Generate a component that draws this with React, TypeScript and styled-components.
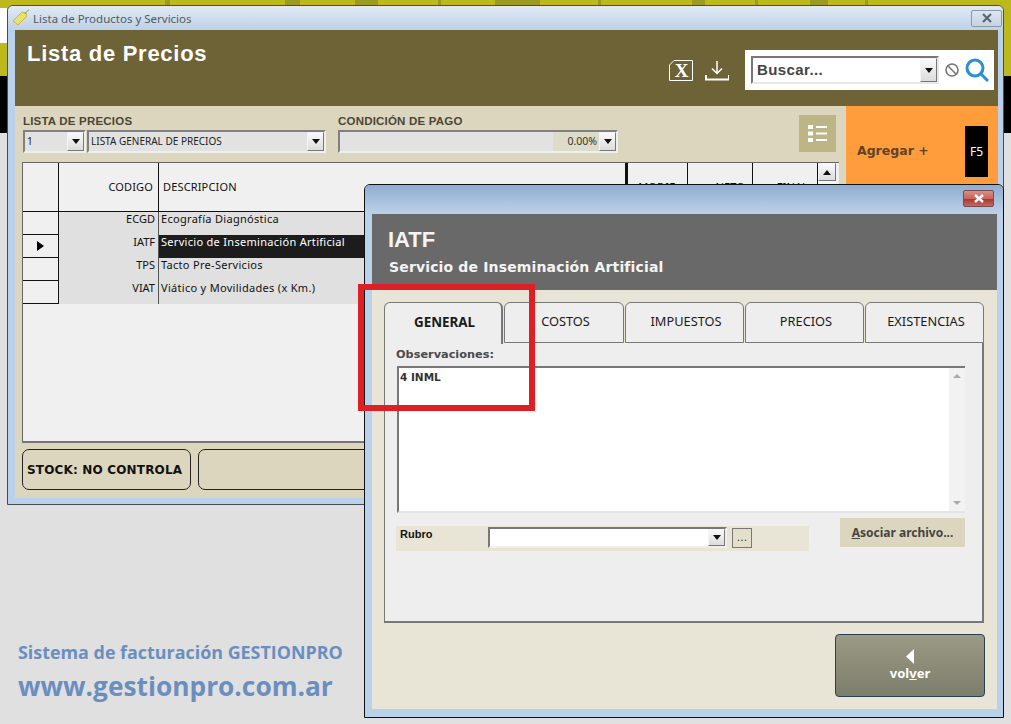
import React from "react";
import styled, { createGlobalStyle } from "styled-components";

const rows = [
  { code: "ECGD", desc: "Ecografía Diagnóstica" },
  { code: "IATF", desc: "Servicio de Inseminación Artificial", selected: true },
  { code: "TPS", desc: "Tacto Pre-Servicios" },
  { code: "VIAT", desc: "Viático y Movilidades (x Km.)" },
];

const tabs = [
  { label: "GENERAL", width: 119 },
  { label: "COSTOS", width: 120 },
  { label: "IMPUESTOS", width: 119 },
  { label: "PRECIOS", width: 119 },
  { label: "EXISTENCIAS", width: 119 },
];

function Caret() {
  return (
    <svg width="8" height="5" viewBox="0 0 8 5">
      <path d="M0 0h8L4 5z" fill="#111" />
    </svg>
  );
}

export default function App() {
  return (
    <>
      <GlobalStyle />
      <Desktop>
        <OliveBand>
          <WhiteEdge />
        </OliveBand>
        <BlackBand />
        <GrayArea>
          <Promo>
            <PromoLine>Sistema de facturación GESTIONPRO</PromoLine>
            <PromoUrl>www.gestionpro.com.ar</PromoUrl>
          </Promo>
        </GrayArea>

        <MainWindow>
          <MainTitleBar>
            <svg width="18" height="18" viewBox="0 0 18 18">
              <path d="M1 12 10 3l4 1 1 3-9 9z" fill="#e8e070" stroke="#c4bb40" />
              <path d="M13 5c1-2 2-3 4-4" fill="none" stroke="#777" strokeWidth="0.8" />
            </svg>
            <MainTitleText>Lista de Productos y Servicios</MainTitleText>
            <MainClose>
              <svg width="12" height="10" viewBox="0 0 12 10">
                <path d="M2 1l8 8M10 1 2 9" stroke="#5c6670" strokeWidth="2.2" fill="none" />
              </svg>
            </MainClose>
          </MainTitleBar>
          <MainFrame>
            <Header>
              <PageTitle>Lista de Precios</PageTitle>
              <HeaderTools>
                <svg width="24" height="21" viewBox="0 0 24 21">
                  <path d="M5 .5h18.500v20H.5V5z" fill="none" stroke="#fff" />
                  <text x="12.500" y="16.500" textAnchor="middle" fontFamily="Liberation Serif" fontWeight="700" fontSize="19" fill="#fff">X</text>
                </svg>
                <svg width="24" height="21" viewBox="0 0 24 21">
                  <path d="M12 1v12M7 8.500l5 5 5-5" fill="none" stroke="#fff" strokeWidth="1.500" />
                  <path d="M1 15v4.500h23V15" fill="none" stroke="#fff" strokeWidth="2" />
                </svg>
                <SearchBox>
                  <SearchCombo>
                    <SearchText>Buscar...</SearchText>
                    <DropButton>
                      <Caret />
                    </DropButton>
                  </SearchCombo>
                  <svg width="16" height="16" viewBox="0 0 16 16">
                    <circle cx="8" cy="8" r="6" fill="none" stroke="#777" strokeWidth="1.600" />
                    <path d="M3.800 3.800l8.400 8.400" stroke="#777" strokeWidth="1.600" />
                  </svg>
                  <svg width="24" height="24" viewBox="0 0 24 24">
                    <circle cx="10" cy="10" r="8" fill="none" stroke="#2b8fd6" strokeWidth="3" />
                    <path d="M15.500 15.500 23 23" stroke="#2b8fd6" strokeWidth="3" />
                  </svg>
                </SearchBox>
              </HeaderTools>
            </Header>
            <MainBody>
              <BodyLeft>
                <FilterRow>
                  <FilterGroup>
                    <FilterLabel>LISTA DE PRECIOS</FilterLabel>
                    <ComboRow>
                      <Combo $width={63}>
                        <ComboText>1</ComboText>
                        <DropButton>
                          <Caret />
                        </DropButton>
                      </Combo>
                      <Combo $width={239}>
                        <ComboText>LISTA GENERAL DE PRECIOS</ComboText>
                        <DropButton>
                          <Caret />
                        </DropButton>
                      </Combo>
                    </ComboRow>
                  </FilterGroup>
                  <FilterGroup>
                    <FilterLabel>CONDICIÓN DE PAGO</FilterLabel>
                    <Combo $width={280}>
                      <ComboFill />
                      <Percent>0.00%</Percent>
                      <DropButton>
                        <Caret />
                      </DropButton>
                    </Combo>
                  </FilterGroup>
                  <ListButton>
                    <svg width="19" height="17" viewBox="0 0 19 17">
                      <path d="M0 0h5v4H0zM0 6.500h5v4H0zM0 13h5v4H0z" fill="#fff" />
                      <path d="M8 1h11v2H8zM8 7.500h11v2H8zM8 14h11v2H8z" fill="#fff" />
                    </svg>
                  </ListButton>
                </FilterRow>
                <Grid>
                  <HeadCell />
                  <HeadCell $align="right" $pad={5}>CODIGO</HeadCell>
                  <HeadCell $thick>DESCRIPCION</HeadCell>
                  <HeadCell $align="right" $pad={12}>MODIF</HeadCell>
                  <HeadCell $align="right" $pad={7}>NETO</HeadCell>
                  <HeadCell $align="right" $pad={9}>FINAL</HeadCell>
                  <ScrollColumn>
                    <ScrollButton>
                      <svg width="8" height="5" viewBox="0 0 8 5">
                        <path d="M0 5h8L4 0z" fill="#111" />
                      </svg>
                    </ScrollButton>
                  </ScrollColumn>
                  {rows.map((row) => (
                    <React.Fragment key={row.code}>
                      <Selector>
                        {row.selected && (
                          <svg width="7" height="10" viewBox="0 0 7 10">
                            <path d="M0 0l7 5-7 5z" fill="#000" />
                          </svg>
                        )}
                      </Selector>
                      <CodeCell>{row.code}</CodeCell>
                      <DescCell $selected={row.selected}>{row.desc}</DescCell>
                      <DataCell />
                      <DataCell />
                      <DataCell />
                    </React.Fragment>
                  ))}
                </Grid>
                <StatusRow>
                  <StatusBox $width={169}>STOCK: NO CONTROLA</StatusBox>
                  <StatusBox $width={630} />
                </StatusRow>
              </BodyLeft>
              <AddPanel>
                <AddRow>
                  <AddLabel>Agregar +</AddLabel>
                  <KeyBadge>F5</KeyBadge>
                </AddRow>
              </AddPanel>
            </MainBody>
          </MainFrame>
        </MainWindow>

        <Modal>
          <ModalTitleBar>
            <ModalClose>
              <svg width="12" height="9" viewBox="0 0 12 9">
                <path d="M2 1l8 7M10 1 2 8" stroke="#fff" strokeWidth="2.400" fill="none" />
              </svg>
            </ModalClose>
          </ModalTitleBar>
          <ModalFrame>
            <ItemHeader>
              <ItemCode>IATF</ItemCode>
              <ItemName>Servicio de Inseminación Artificial</ItemName>
            </ItemHeader>
            <ModalBody>
              <TabStrip>
                {tabs.map((tab, i) => (
                  <Tab key={tab.label} $active={i === 0} $width={tab.width}>
                    {tab.label}
                  </Tab>
                ))}
              </TabStrip>
              <TabPanel>
                <ObsLabel>Observaciones:</ObsLabel>
                <ObsBox>
                  <ObsText>4 INML</ObsText>
                  <ObsScroll>
                    <svg width="8" height="4" viewBox="0 0 8 4">
                      <path d="M0 4h8L4 0z" fill="#aaa" />
                    </svg>
                    <svg width="8" height="4" viewBox="0 0 8 4">
                      <path d="M0 0h8L4 4z" fill="#aaa" />
                    </svg>
                  </ObsScroll>
                </ObsBox>
                <RubroRow>
                  <RubroGroup>
                    <RubroLabel>Rubro</RubroLabel>
                    <RubroCombo>
                      <DropButton>
                        <Caret />
                      </DropButton>
                    </RubroCombo>
                    <DotsButton>...</DotsButton>
                  </RubroGroup>
                  <AttachButton>
                    <u>A</u>sociar archivo...
                  </AttachButton>
                </RubroRow>
              </TabPanel>
              <ModalFooter>
                <BackButton>
                  <svg width="10" height="15" viewBox="0 0 10 15">
                    <path d="M9 0v15L1 7.500z" fill="#fff" />
                  </svg>
                  <span>
                    vol<u>v</u>er
                  </span>
                </BackButton>
              </ModalFooter>
            </ModalBody>
          </ModalFrame>
        </Modal>

        <RedMark />
      </Desktop>
    </>
  );
}

const GlobalStyle = createGlobalStyle`
  html, body {
    margin: 0;
    padding: 0;
    background: #e0e0e0;
  }
  * {
    box-sizing: border-box;
  }
`;

const uiFont = `"DejaVu Sans", Verdana, sans-serif`;

const Desktop = styled.div`
  position: relative;
  width: 1011px;
  height: 724px;
  overflow: hidden;
  display: flex;
  flex-direction: column;
  font-family: ${uiFont};
`;

const OliveBand = styled.div`
  height: 76px;
  padding-top: 8px;
  background: linear-gradient(
    90deg,
    #bdb91c 165px,
    #9d9a22 165px 170px,
    #bdb91c 170px 285px,
    #9d9a22 285px 300px,
    #bdb91c 300px 355px,
    #9d9a22 355px 378px,
    #bdb91c 378px 438px,
    #9d9a22 438px 441px,
    #bdb91c 441px 495px,
    #9d9a22 495px 540px,
    #bdb91c 540px 598px,
    #9d9a22 598px 601px,
    #bdb91c 601px 692px,
    #9d9a22 692px 705px,
    #bdb91c 705px 755px,
    #9d9a22 755px 758px,
    #bdb91c 758px 810px,
    #9d9a22 810px 828px,
    #bdb91c 828px 865px,
    #9d9a22 865px 868px,
    #bdb91c 868px
  );
`;

const WhiteEdge = styled.div`
  width: 7px;
  height: 35px;
  background: #fff;
`;

const BlackBand = styled.div`
  height: 57px;
  background: #000;
`;

const GrayArea = styled.div`
  flex: 1;
  background: #e0e0e0;
  display: flex;
  flex-direction: column;
  justify-content: flex-end;
  padding: 0 0 21px 18px;
`;

const Promo = styled.div`
  display: flex;
  flex-direction: column;
  gap: 5px;
  color: #6a8fbf;
  font-family: "Open Sans", sans-serif;
  font-weight: 700;
`;

const PromoLine = styled.div`
  font-size: 17.900px;
  line-height: 24px;
`;

const PromoUrl = styled.div`
  font-size: 26.300px;
  line-height: 34px;
`;

const MainWindow = styled.div`
  position: absolute;
  left: 7px;
  top: 5px;
  width: 997px;
  height: 500px;
  display: flex;
  flex-direction: column;
  background: #b9d1ea;
  border: 1px solid #454c52;
  border-radius: 6px 6px 0 0;
`;

const MainTitleBar = styled.div`
  height: 24px;
  display: flex;
  align-items: center;
  gap: 3px;
  padding: 0 1px 0 4px;
  background: linear-gradient(#e3eaf3, #bcd1e8);
  border-radius: 5px 5px 0 0;
`;

const MainTitleText = styled.div`
  flex: 1;
  font-family: "Noto Sans", sans-serif;
  font-size: 11.500px;
  color: #55595e;
`;

const MainClose = styled.div`
  width: 31px;
  height: 17px;
  display: flex;
  align-items: center;
  justify-content: center;
  border: 1px solid #8a98a8;
  border-radius: 2px;
  background: linear-gradient(#dde6f0, #c5d3e3);
`;

const MainFrame = styled.div`
  flex: 1;
  display: flex;
  flex-direction: column;
  margin: 0 5px 6px 7px;
`;

const Header = styled.div`
  height: 76px;
  display: flex;
  justify-content: space-between;
  background: #6e6337;
`;

const PageTitle = styled.h1`
  margin: 10px 0 0 12px;
  font-family: "Liberation Sans", Arial, sans-serif;
  font-size: 22px;
  line-height: 28px;
  letter-spacing: 0.720px;
  font-weight: 700;
  color: #fff;
`;

const HeaderTools = styled.div`
  display: flex;
  align-items: center;
  gap: 12px;
  padding: 0 4px 6px 0;
  height: 76px;
  margin-top: 5px;
`;

const SearchBox = styled.div`
  width: 249px;
  height: 40px;
  margin-left: 4px;
  display: flex;
  align-items: center;
  gap: 5px;
  padding: 0 5px 0 6px;
  background: #fff;
`;

const SearchCombo = styled.div`
  width: 188px;
  height: 28px;
  display: flex;
  align-items: stretch;
  border: 2px solid;
  border-color: #777 #e8e8e8 #e8e8e8 #777;
`;

const SearchText = styled.div`
  flex: 1;
  padding-left: 4px;
  font-family: "Liberation Sans", Arial, sans-serif;
  font-size: 15px;
  line-height: 24px;
  letter-spacing: 0.400px;
  font-weight: 700;
  color: #444;
`;

const DropButton = styled.div`
  flex: none;
  width: 17px;
  display: flex;
  align-items: center;
  justify-content: center;
  background: linear-gradient(#fafafa, #dcdcdc);
  border: 1px solid;
  border-color: #f4f4f4 #777 #777 #f4f4f4;
`;

const MainBody = styled.div`
  flex: 1;
  min-height: 0;
  display: flex;
  background: #ddd6bf;
`;

const BodyLeft = styled.div`
  width: 831px;
  display: flex;
  flex-direction: column;
  padding: 9px 7px 0;
`;

const FilterRow = styled.div`
  height: 47px;
  display: flex;
  gap: 11px;
`;

const FilterGroup = styled.div`
  display: flex;
  flex-direction: column;
  gap: 2px;
  padding-left: 1px;
`;

const FilterLabel = styled.div`
  height: 13px;
  font-family: "Liberation Sans", Arial, sans-serif;
  font-size: 11.500px;
  line-height: 13px;
  letter-spacing: 0.200px;
  font-weight: 700;
  color: #4a4636;
`;

const ComboRow = styled.div`
  display: flex;
  gap: 1px;
`;

const Combo = styled.div<{ $width: number }>`
  width: ${(p) => p.$width}px;
  height: 23px;
  display: flex;
  align-items: stretch;
  background: #e2e2e2;
  border: 2px solid;
  border-color: #808080 #efefef #efefef #808080;
`;

const ComboText = styled.div`
  flex: 1;
  padding-left: 2px;
  font-family: "Noto Sans", sans-serif;
  font-size: 10px;
  line-height: 18px;
  color: #222;
  white-space: nowrap;
  overflow: hidden;
`;

const ComboFill = styled.div`
  flex: 1;
`;

const Percent = styled.div`
  width: 46px;
  padding-right: 2px;
  text-align: right;
  background: #dcdcc8;
  font-family: "Noto Sans", sans-serif;
  font-size: 10.500px;
  line-height: 18px;
  color: #333;
`;

const ListButton = styled.div`
  width: 37px;
  height: 37px;
  margin-left: 170px;
  display: flex;
  align-items: center;
  justify-content: center;
  background: #bdb585;
`;

const Grid = styled.div`
  height: 281px;
  display: grid;
  grid-template-columns: 36px 100px 469px 60px 65px 65px 18px;
  grid-template-rows: 49px repeat(4, 23px) 1fr;
  align-content: start;
  background: #f0f0f0;
  border-top: 1px solid #666;
  border-left: 1px solid #666;
  border-bottom: 2px solid #777;
`;

const HeadCell = styled.div<{ $align?: string; $thick?: boolean; $pad?: number }>`
  display: flex;
  align-items: center;
  justify-content: ${(p) => (p.$align === "right" ? "flex-end" : "flex-start")};
  padding: 0 ${(p) => p.$pad ?? 4}px 2px 4px;
  font-family: "Noto Sans", sans-serif;
  font-size: 11px;
  letter-spacing: 0.150px;
  color: #111;
  background: #f0f0f0;
  border-right: ${(p) => (p.$thick ? "3px" : "1px")} solid #111;
  border-bottom: 1px solid #111;
`;

const ScrollColumn = styled.div`
  grid-row: 1 / span 6;
  grid-column: 7;
  background: #f6f6f6;
`;

const ScrollButton = styled.div`
  height: 18px;
  display: flex;
  align-items: center;
  justify-content: center;
  background: linear-gradient(#fafafa, #dcdcdc);
  border: 1px solid;
  border-color: #f4f4f4 #777 #777 #f4f4f4;
`;

const Selector = styled.div`
  display: flex;
  align-items: center;
  justify-content: center;
  background: #f0f0f0;
  border-right: 1px solid #111;
  border-bottom: 1px solid #111;
`;

const CodeCell = styled.div`
  padding: 0 3px 0 0;
  text-align: right;
  background: #e0e0e0;
  border-right: 1px solid #555;
  font-family: "Noto Sans", sans-serif;
  font-size: 11px;
  line-height: 14px;
  color: #111;
`;

const DescCell = styled.div<{ $selected?: boolean }>`
  padding-left: 2px;
  font-family: "Noto Sans", sans-serif;
  font-size: 11px;
  line-height: 14px;
  letter-spacing: 0.300px;
  white-space: nowrap;
  color: ${(p) => (p.$selected ? "#fff" : "#111")};
  background: ${(p) => (p.$selected ? "#1c1c1c" : "#e0e0e0")};
`;

const DataCell = styled.div`
  background: #e0e0e0;
`;

const StatusRow = styled.div`
  display: flex;
  gap: 7px;
  margin-top: 6px;
`;

const StatusBox = styled.div<{ $width: number }>`
  width: ${(p) => p.$width}px;
  height: 41px;
  display: flex;
  align-items: center;
  padding-left: 4px;
  background: #ddd6bf;
  border: 1px solid #222;
  border-radius: 7px;
  font-family: "DejaVu Sans", sans-serif;
  font-size: 12px;
  letter-spacing: 0.170px;
  font-weight: 700;
  color: #111;
  white-space: nowrap;
`;

const AddPanel = styled.div`
  width: 152px;
  background: #ff9c3c;
  padding: 20px 10px 0 11px;
`;

const AddRow = styled.div`
  display: flex;
  align-items: center;
  justify-content: space-between;
  height: 51px;
`;

const AddLabel = styled.div`
  margin-top: -2px;
  font-family: "DejaVu Sans", sans-serif;
  font-size: 12.500px;
  font-weight: 700;
  color: #5e4426;
`;

const KeyBadge = styled.div`
  width: 23px;
  height: 51px;
  display: flex;
  align-items: center;
  justify-content: center;
  background: #000;
  color: #fff;
  font-family: "Noto Sans", sans-serif;
  font-size: 12px;
`;

const Modal = styled.div`
  position: absolute;
  left: 364px;
  top: 184px;
  width: 640px;
  height: 534px;
  display: flex;
  flex-direction: column;
  background: #b9d1ea;
  border: 1px solid #111;
  border-radius: 6px 6px 0 0;
`;

const ModalTitleBar = styled.div`
  height: 29px;
  display: flex;
  align-items: center;
  justify-content: flex-end;
  padding-right: 9px;
  background: linear-gradient(#8faccf, #bcd2e8);
  border-radius: 5px 5px 0 0;
`;

const ModalClose = styled.div`
  width: 31px;
  height: 17px;
  margin-bottom: 2px;
  display: flex;
  align-items: center;
  justify-content: center;
  background: linear-gradient(#d99088 0%, #c9645a 50%, #a83a30 55%, #c06a60 100%);
  border: 1px solid #7a4a50;
  border-radius: 2px;
`;

const ModalFrame = styled.div`
  flex: 1;
  display: flex;
  flex-direction: column;
  margin: 0 6px 8px 7px;
`;

const ItemHeader = styled.div`
  height: 76px;
  padding: 14px 16px 0;
  background: #696969;
  color: #f4f4f4;
`;

const ItemCode = styled.div`
  font-family: "Liberation Sans", Arial, sans-serif;
  font-size: 22px;
  line-height: 24px;
  font-weight: 700;
`;

const ItemName = styled.div`
  margin: 6px 0 0 1px;
  font-family: "DejaVu Sans", sans-serif;
  font-size: 14px;
  line-height: 18px;
  letter-spacing: 0.150px;
  font-weight: 700;
`;

const ModalBody = styled.div`
  flex: 1;
  display: flex;
  flex-direction: column;
  padding: 12px 12px 0 12px;
  background: #e9e5d6;
`;

const TabStrip = styled.div`
  display: flex;
  gap: 1px;
  height: 41px;
`;

const Tab = styled.div<{ $active?: boolean; $width: number }>`
  width: ${(p) => p.$width}px;
  height: ${(p) => (p.$active ? "42px" : "41px")};
  padding: 0 0 4px 3px;
  position: relative;
  z-index: ${(p) => (p.$active ? 1 : 0)};
  display: flex;
  align-items: center;
  justify-content: center;
  background: #eeeeee;
  border: 1px solid #777;
  border-bottom: ${(p) => (p.$active ? "none" : "1px solid #777")};
  border-right-width: ${(p) => (p.$active ? "2px" : "1px")};
  border-radius: 6px 6px 0 0;
  font-family: "Noto Sans", sans-serif;
  font-size: ${(p) => (p.$active ? "13.400px" : "12.800px")};
  font-weight: ${(p) => (p.$active ? 700 : 400)};
  color: #1a1a1a;
`;

const TabPanel = styled.div`
  width: 600px;
  height: 280px;
  display: flex;
  flex-direction: column;
  padding: 5px 17px 0 12px;
  background: #eeeeee;
  border: 1px solid #777;
  border-top: none;
  border-right-width: 2px;
  border-bottom-width: 2px;
`;

const ObsLabel = styled.div`
  height: 18px;
  margin-left: -1px;
  font-family: "DejaVu Sans", sans-serif;
  font-size: 11.300px;
  line-height: 14px;
  font-weight: 700;
  color: #4a4a4a;
`;

const ObsBox = styled.div`
  width: 568px;
  height: 147px;
  display: flex;
  background: #fff;
  border-top: 2px solid #777;
  border-left: 2px solid #777;
  border-bottom: 2px solid #e4e4e4;
`;

const ObsText = styled.div`
  flex: 1;
  padding: 2px 0 0 1px;
  font-family: "DejaVu Sans", sans-serif;
  font-size: 10.500px;
  line-height: 14px;
  font-weight: 700;
  color: #333;
`;

const ObsScroll = styled.div`
  width: 16px;
  display: flex;
  flex-direction: column;
  align-items: center;
  justify-content: space-between;
  padding: 6px 0;
  background: #f2f2f2;
`;

const RubroRow = styled.div`
  display: flex;
  align-items: flex-start;
  justify-content: space-between;
  margin: 5px 0 0 -1px;
  width: 569px;
`;

const RubroGroup = styled.div`
  width: 413px;
  height: 25px;
  margin-top: 8px;
  display: flex;
  align-items: center;
  padding-left: 4px;
  background: #e9e5d6;
`;

const RubroLabel = styled.div`
  width: 88px;
  margin-top: -9px;
  font-family: "Liberation Sans", Arial, sans-serif;
  font-size: 11px;
  font-weight: 700;
  color: #111;
`;

const RubroCombo = styled.div`
  width: 239px;
  height: 21px;
  margin-top: -2px;
  display: flex;
  justify-content: flex-end;
  background: #fff;
  border: 2px solid;
  border-color: #777 #eee #eee #777;
`;

const DotsButton = styled.div`
  width: 20px;
  height: 20px;
  margin: -2px 0 0 5px;
  text-align: center;
  background: #e4dfcb;
  border: 1px solid #777;
  font-family: "DejaVu Sans", sans-serif;
  font-size: 11px;
  line-height: 17px;
  color: #333;
`;

const AttachButton = styled.div`
  width: 125px;
  height: 29px;
  display: flex;
  align-items: center;
  justify-content: center;
  background: #ddd6bf;
  font-family: "Noto Sans", sans-serif;
  font-size: 12px;
  font-weight: 700;
  color: #444;
`;

const ModalFooter = styled.div`
  display: flex;
  justify-content: flex-end;
  margin-top: 11px;
`;

const BackButton = styled.div`
  width: 150px;
  height: 63px;
  display: flex;
  flex-direction: column;
  align-items: center;
  justify-content: center;
  background: linear-gradient(#9a9a85, #7d7d6c);
  border: 1px solid #2a3f4f;
  border-radius: 4px;
  color: #fff;
  font-family: "Noto Sans", sans-serif;
  font-size: 13px;
  font-weight: 700;
`;

const RedMark = styled.div`
  position: absolute;
  left: 358px;
  top: 284px;
  width: 177px;
  height: 127px;
  border: 6px solid #dd1f26;
`;
